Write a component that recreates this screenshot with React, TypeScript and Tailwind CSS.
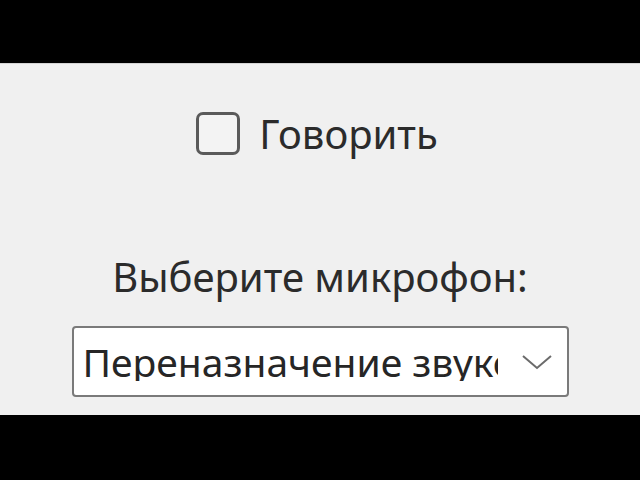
export default function App() {
  return (
    <div className="flex h-[480px] w-[640px] flex-col bg-black font-['Noto_Sans',sans-serif]">
      <div className="h-[63px] bg-black" />
      <div className="flex flex-1 flex-col items-center bg-[#f0f0f0] border-t border-[#d4d4d4]">
        {/* checkbox row */}
        <div className="mt-[48px] flex h-[43px] items-center gap-[19px] pr-[6px]">
          <div className="h-[43px] w-[44px] rounded-[7px] border-[3px] border-[#5a5a5a] bg-[#f3f3f3]" />
          <span className="text-[40px] leading-none text-[#2b2b2b]">Говорить</span>
        </div>

        <div className="mt-[102px] text-[40px] leading-none text-[#2b2b2b]">Выберите микрофон:</div>

        <div className="mt-[29px] flex h-[71px] w-[497px] items-center rounded-[4px] border-2 border-[#7a7a7a] bg-white pl-[9px] pr-[14px]">
          <div className="w-[415px] overflow-hidden whitespace-nowrap text-[39px] leading-none text-[#262626]">
            Переназначение звуковых устройств
          </div>
          <svg className="ml-auto" width="32" height="16" viewBox="0 0 32 16" fill="none">
            <path d="M2 2 L16 14 L30 2" stroke="#6b6b6b" strokeWidth="2" />
          </svg>
        </div>
      </div>
      <div className="h-[65px] bg-black" />
    </div>
  );
}
